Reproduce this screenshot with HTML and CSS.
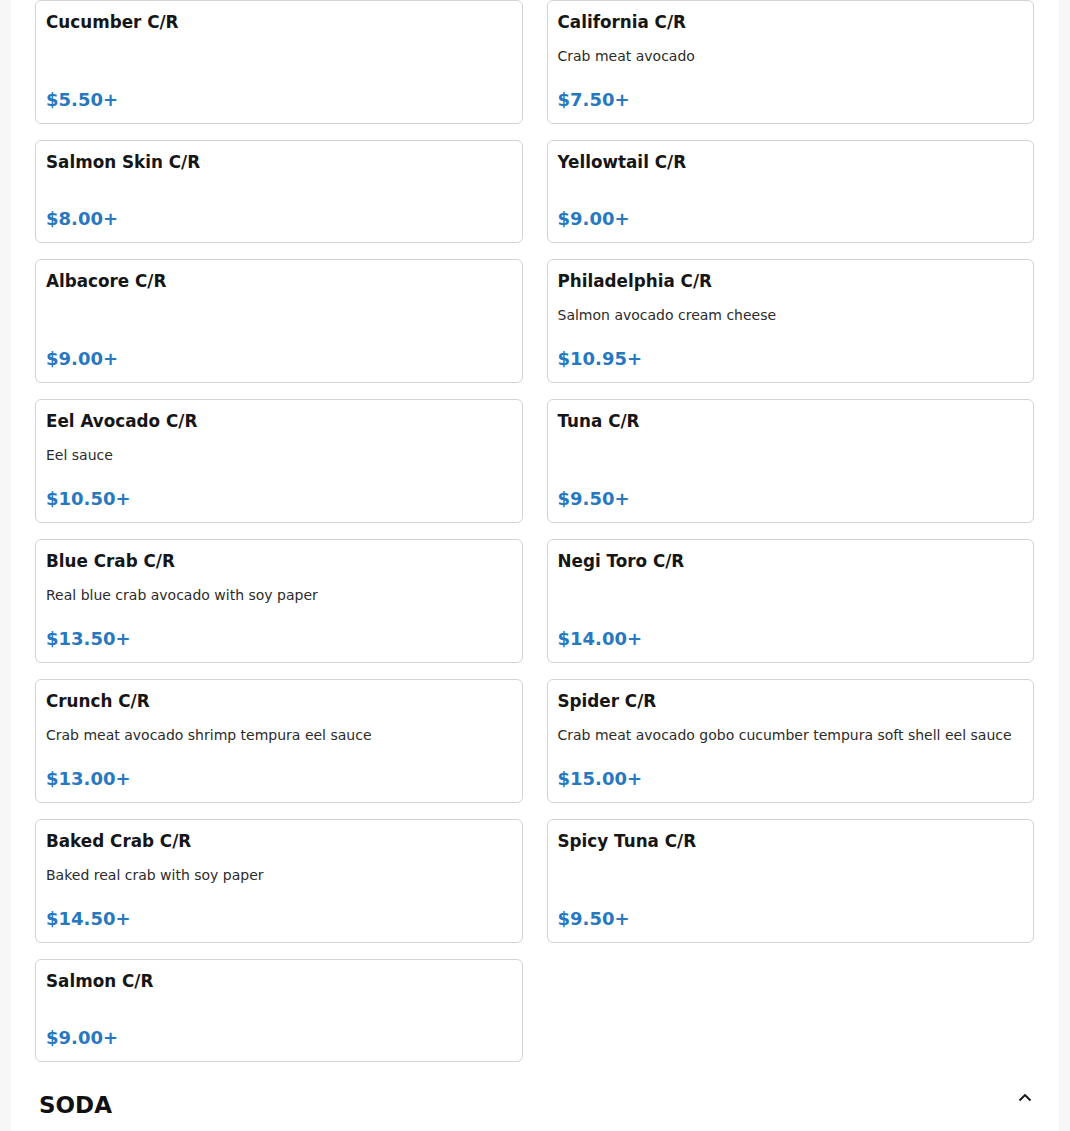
FILE: index.html
```html
<!DOCTYPE html>
<html lang="en">
<head>
<meta charset="utf-8">
<title>Menu</title>
<link rel="stylesheet" href="styles.css">
</head>
<body>
<div class="page">
  <section class="category">
    <div class="grid">
      <div class="card"><h3 class="name">Cucumber C/R</h3><div class="price">$5.50+</div></div>
      <div class="card"><h3 class="name">California C/R</h3><p class="desc">Crab meat avocado</p><div class="price">$7.50+</div></div>
      <div class="card"><h3 class="name">Salmon Skin C/R</h3><div class="price">$8.00+</div></div>
      <div class="card"><h3 class="name">Yellowtail C/R</h3><div class="price">$9.00+</div></div>
      <div class="card"><h3 class="name">Albacore C/R</h3><div class="price">$9.00+</div></div>
      <div class="card"><h3 class="name">Philadelphia C/R</h3><p class="desc">Salmon avocado cream cheese</p><div class="price">$10.95+</div></div>
      <div class="card"><h3 class="name">Eel Avocado C/R</h3><p class="desc">Eel sauce</p><div class="price">$10.50+</div></div>
      <div class="card"><h3 class="name">Tuna C/R</h3><div class="price">$9.50+</div></div>
      <div class="card"><h3 class="name">Blue Crab C/R</h3><p class="desc">Real blue crab avocado with soy paper</p><div class="price">$13.50+</div></div>
      <div class="card"><h3 class="name">Negi Toro C/R</h3><div class="price">$14.00+</div></div>
      <div class="card"><h3 class="name">Crunch C/R</h3><p class="desc">Crab meat avocado shrimp tempura eel sauce</p><div class="price">$13.00+</div></div>
      <div class="card"><h3 class="name">Spider C/R</h3><p class="desc">Crab meat avocado gobo cucumber tempura soft shell eel sauce</p><div class="price">$15.00+</div></div>
      <div class="card"><h3 class="name">Baked Crab C/R</h3><p class="desc">Baked real crab with soy paper</p><div class="price">$14.50+</div></div>
      <div class="card"><h3 class="name">Spicy Tuna C/R</h3><div class="price">$9.50+</div></div>
      <div class="card"><h3 class="name">Salmon C/R</h3><div class="price">$9.00+</div></div>
    </div>
  </section>
  <section class="category-head">
    <h2 class="cat-title">SODA</h2>
    <svg class="chevron" width="14" height="9" viewBox="0 0 14 9" aria-hidden="true">
      <path d="M1.5 7.5 L7 2 L12.5 7.5" fill="none" stroke="#111" stroke-width="1.8"/>
    </svg>
  </section>
</div>
</body>
</html>
```

FILE: styles.css
```css
html, body {
  margin: 0;
  padding: 0;
}
body {
  background: #f7f7f8;
  font-family: "DejaVu Sans", "Liberation Sans", sans-serif;
  color: #1a1a1a;
}
.page {
  margin: 0 11px;
  background: #ffffff;
  min-height: 1131px;
}
.category {
  padding: 0 25px 0 24px;
}
.grid {
  display: grid;
  grid-template-columns: 1fr 1fr;
  column-gap: 24px;
  row-gap: 16px;
}
.card {
  display: flex;
  flex-direction: column;
  border: 1px solid #d3d3d3;
  border-radius: 6px;
  padding: 11px 10px 13px;
  background: #fff;
}
.name {
  margin: 0 0 13px;
  font-size: 16.8px;
  font-weight: bold;
  line-height: 21px;
  color: #161616;
}
.desc {
  margin: 0;
  font-size: 14px;
  line-height: 21px;
  color: #2b2b2b;
}
.price {
  margin-top: auto;
  padding-top: 22px;
  font-size: 18px;
  font-weight: bold;
  line-height: 21px;
  color: #2878c0;
}
.category-head {
  display: flex;
  justify-content: space-between;
  align-items: flex-start;
  padding: 29px 27px 0 28px;
}
.cat-title {
  margin: 0;
  font-size: 23px;
  font-weight: bold;
  line-height: 28px;
  color: #111;
}
.chevron {
  margin-top: 2px;
}
```
